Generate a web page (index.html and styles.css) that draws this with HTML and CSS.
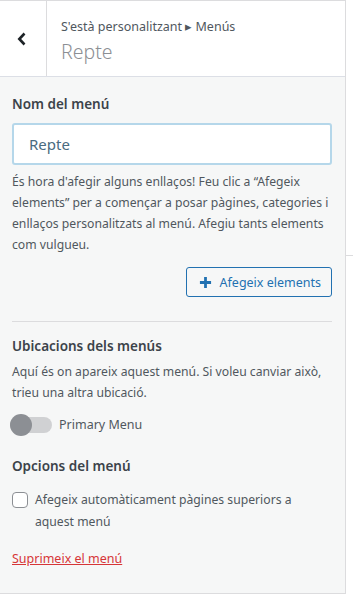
FILE: index.html
```html
<!DOCTYPE html>
<html lang="ca">
<head>
    <meta charset="UTF-8">
    <title>Menús</title>
    <link rel="stylesheet" href="styles.css">
</head>
<body>
<div class="page">
    <div class="panel">
        <div class="panel-header">
            <button class="back" type="button" aria-label="Enrere">
                <svg width="12" height="14" viewBox="0 0 12 14"><path d="M8.5 1.5 L3.3 7 L8.5 12.5" fill="none" stroke="#1d2327" stroke-width="2.6"/></svg>
            </button>
            <div class="title-wrap">
                <div class="crumb">S'està personalitzant ▸ Menús</div>
                <div class="title">Repte</div>
            </div>
        </div>
        <div class="panel-body">
            <label class="section-title" for="menuName">Nom del menú</label>
            <input class="menu-name" type="text" id="menuName" value="Repte">
            <p class="desc">És hora d'afegir alguns enllaços! Feu clic a “Afegeix elements” per a començar a posar pàgines, categories i enllaços personalitzats al menú. Afegiu tants elements com vulgueu.</p>
            <div class="actions">
                <button class="add-items" type="button">
                    <svg width="13" height="13" viewBox="0 0 14 14"><path d="M7 1 V13 M1 7 H13" stroke="#2271b1" stroke-width="3"/></svg>
                    Afegeix elements
                </button>
            </div>
            <hr class="sep">
            <h3 class="section-title">Ubicacions dels menús</h3>
            <p class="desc">Aquí és on apareix aquest menú. Si voleu canviar això, trieu una altra ubicació.</p>
            <div class="toggle-row">
                <span class="toggle"><span class="knob"></span></span>
                <span class="toggle-label">Primary Menu</span>
            </div>
            <h3 class="section-title">Opcions del menú</h3>
            <label class="check-row">
                <span class="checkbox"></span>
                <span>Afegeix automàticament pàgines superiors a aquest menú</span>
            </label>
            <a class="delete" href="#">Suprimeix el menú</a>
        </div>
    </div>
    <div class="side">
        <div class="side-line"></div>
    </div>
</div>
</body>
</html>
```
FILE: styles.css
```css
body { margin: 0; background: #fff; font-family: "Noto Sans", "Open Sans", sans-serif; color: #50575e; }
.page { display: flex; align-items: flex-start; }
.panel { width: 345px; border-right: 1px solid #dcdcde; border-top: 1px solid #dcdcde; border-bottom: 1px solid #dcdcde; background: #f6f7f7; }
.panel-header { display: flex; height: 75px; background: #fff; border-bottom: 1px solid #dcdfe6; }
.back { width: 47px; border: none; border-right: 1px solid #dcdcde; background: #fff; display: flex; align-items: center; justify-content: center; padding: 0 2px 0 0; }
.title-wrap { padding: 17px 0 0 14px; }
.crumb { font-size: 12.5px; line-height: 18px; color: #50575e; }
.title { font-size: 19.5px; line-height: 28px; font-weight: 300; color: #8c8f94; margin-top: 2px; }
.panel-body { padding: 17px 13px 25px 12px; }
.section-title { display: block; margin: 0 0 9px; font-size: 13.5px; font-weight: 600; line-height: 20px; color: #3c434a; }
h3.section-title { margin-bottom: 5px; }
.menu-name { display: block; box-sizing: border-box; width: 100%; height: 42px; padding: 0 15px; border: 2px solid #b5d7ea; border-radius: 3px; background: #fff; font-family: inherit; font-size: 15px; color: #4a6b80; }
.desc { margin: 6px 0 0; font-size: 12.2px; line-height: 21px; }
.actions { display: flex; justify-content: flex-end; margin-top: 12px; }
.add-items { display: flex; align-items: center; gap: 8px; height: 30px; padding: 0 10px 0 12px; border: 1px solid #2271b1; border-radius: 3px; background: #f6f7f7; color: #2271b1; font-family: inherit; font-size: 12.5px; }
.sep { border: none; border-top: 1px solid #dcdcde; margin: 24px 0 14px; }
.section-title + .desc { margin-top: 0; }
.toggle-row { display: flex; align-items: center; gap: 7px; margin: 13px 0 23px -2px; }
.toggle { position: relative; width: 42px; height: 16px; border-radius: 8px; background: #d0d1d3; }
.knob { position: absolute; left: 0; top: -3px; width: 22px; height: 22px; border-radius: 50%; background: #8c8f94; }
.toggle-label { font-size: 12.5px; }
.check-row { display: flex; gap: 7px; font-size: 12.2px; line-height: 22px; margin-top: 13px; }
.checkbox { flex: none; width: 16px; height: 16px; margin-top: 3px; border: 1px solid #8c8f94; border-radius: 4px; background: #fff; box-sizing: border-box; }
.delete { display: inline-block; margin-top: 17px; font-size: 12.5px; color: #d63638; }
.side { flex: 1; }
.side-line { margin-top: 255px; border-top: 1px solid #dcdcde; }
```
